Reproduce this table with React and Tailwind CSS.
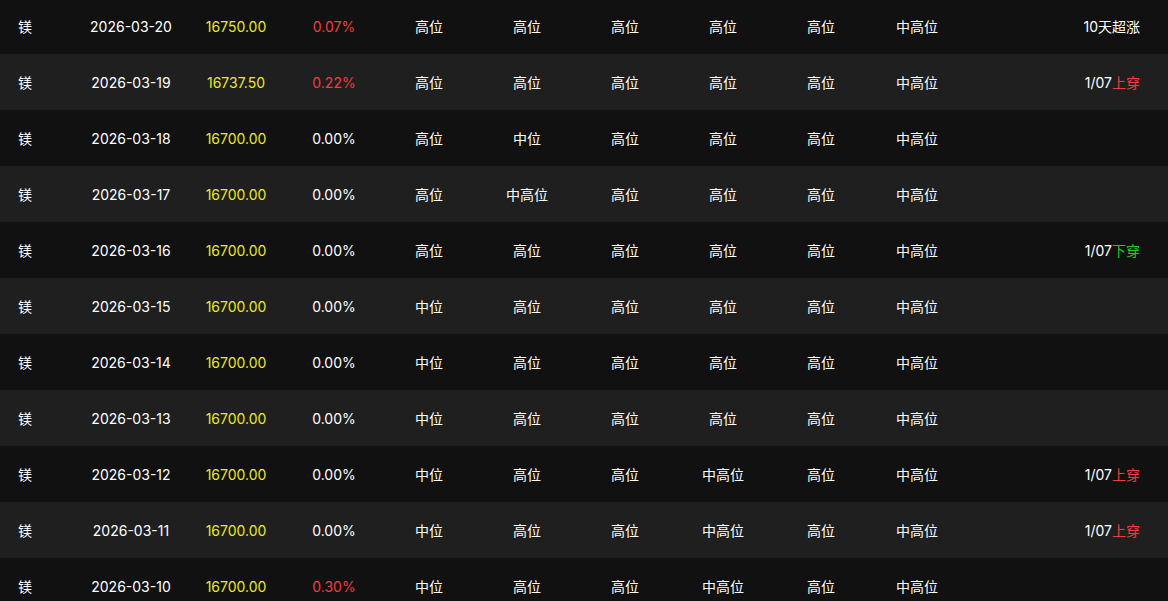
import React from "react";

const rows = [
  { date: "2026-03-20", price: "16750.00", pct: "0.07%", up: true, lv: ["高位", "高位", "高位", "高位", "高位", "中高位"], note: { text: "10天超涨" } },
  { date: "2026-03-19", price: "16737.50", pct: "0.22%", up: true, lv: ["高位", "高位", "高位", "高位", "高位", "中高位"], note: { text: "1/07", tag: "上穿" } },
  { date: "2026-03-18", price: "16700.00", pct: "0.00%", lv: ["高位", "中位", "高位", "高位", "高位", "中高位"] },
  { date: "2026-03-17", price: "16700.00", pct: "0.00%", lv: ["高位", "中高位", "高位", "高位", "高位", "中高位"] },
  { date: "2026-03-16", price: "16700.00", pct: "0.00%", lv: ["高位", "高位", "高位", "高位", "高位", "中高位"], note: { text: "1/07", tag: "下穿" } },
  { date: "2026-03-15", price: "16700.00", pct: "0.00%", lv: ["中位", "高位", "高位", "高位", "高位", "中高位"] },
  { date: "2026-03-14", price: "16700.00", pct: "0.00%", lv: ["中位", "高位", "高位", "高位", "高位", "中高位"] },
  { date: "2026-03-13", price: "16700.00", pct: "0.00%", lv: ["中位", "高位", "高位", "高位", "高位", "中高位"] },
  { date: "2026-03-12", price: "16700.00", pct: "0.00%", lv: ["中位", "高位", "高位", "中高位", "高位", "中高位"], note: { text: "1/07", tag: "上穿" } },
  { date: "2026-03-11", price: "16700.00", pct: "0.00%", lv: ["中位", "高位", "高位", "中高位", "高位", "中高位"], note: { text: "1/07", tag: "上穿" } },
  { date: "2026-03-10", price: "16700.00", pct: "0.30%", up: true, lv: ["中位", "高位", "高位", "中高位", "高位", "中高位"] },
];

// widths picked so the centred text lands where the original table puts it
const lvWidths = ["w-[98px]", "w-[98px]", "w-[98px]", "w-[98px]", "w-[98px]", "w-[94px]"];

function Row({ r, i }) {
  return (
    <div className={`flex h-[56px] items-center ${i % 2 ? "bg-[#1f1f1f]" : "bg-[#111111]"}`}>
      <div className="w-[78px] shrink-0 pl-[18px]">镁</div>
      <div className="w-[106px] shrink-0 text-center">{r.date}</div>
      <div className="w-[104px] shrink-0 text-center text-[#e8e82a]">{r.price}</div>
      <div className={`w-[92px] shrink-0 text-center ${r.up ? "text-[#f03e3e]" : ""}`}>{r.pct}</div>
      {r.lv.map((v, k) => (
        <div key={k} className={`${lvWidths[k]} shrink-0 text-center`}>
          {v}
        </div>
      ))}
      <div className="flex-1 pr-[28px] text-right">
        {r.note && (
          <span>
            {r.note.text}
            {r.note.tag && (
              <span className={r.note.tag === "上穿" ? "text-[#f03e3e]" : "text-[#22cc22]"}>{r.note.tag}</span>
            )}
          </span>
        )}
      </div>
    </div>
  );
}

export default function App() {
  return (
    <div
      className="h-[601px] w-[1168px] overflow-hidden bg-[#111111] text-[14px] text-white"
      style={{ fontFamily: 'Inter, "Noto Sans CJK SC", sans-serif' }}
    >
      <div className="-mt-[2px]">
        {rows.map((r, i) => (
          <Row key={r.date} r={r} i={i} />
        ))}
      </div>
    </div>
  );
}
